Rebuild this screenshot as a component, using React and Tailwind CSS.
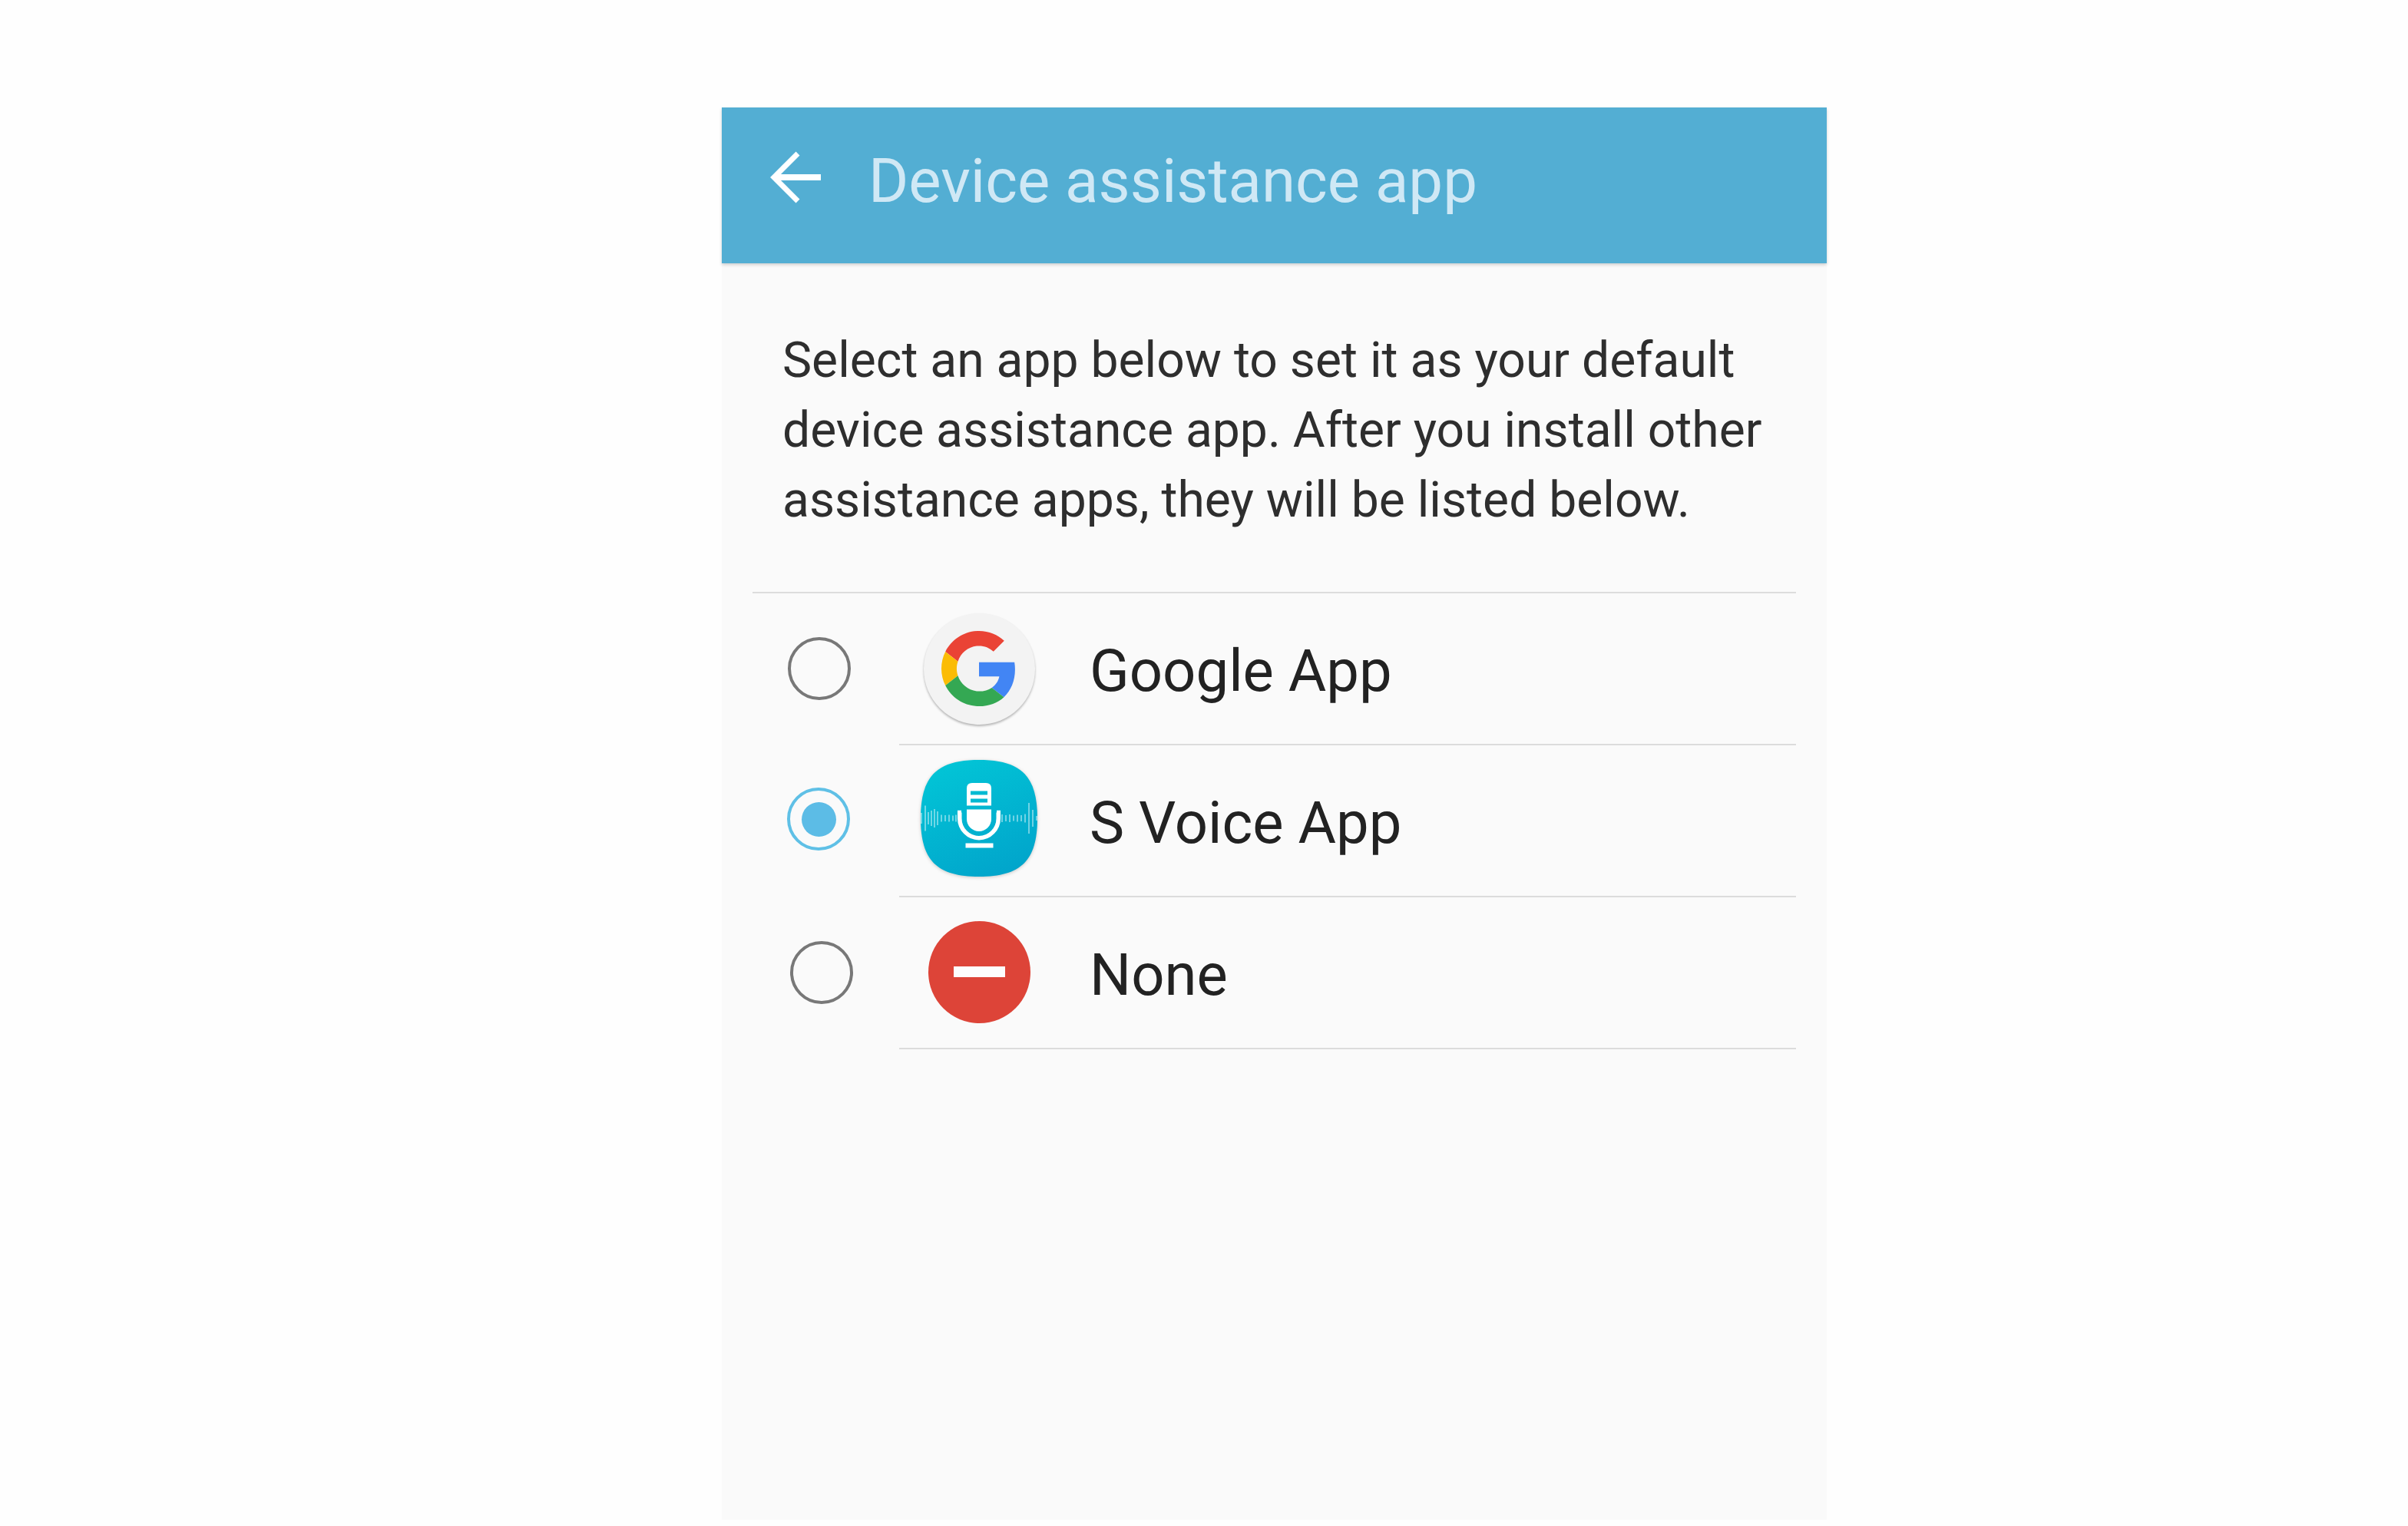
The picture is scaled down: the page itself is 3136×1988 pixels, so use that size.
const waveBars = [
  [-75, 14], [-70, 33], [-66, 16], [-62, 20], [-58, 24], [-54, 18], [-49, 9], [-44, 8], [-39, 9], [-34, 7], [-30, 9],
  [30, 10], [35, 8], [40, 10], [45, 7], [50, 9], [55, 8], [60, 11], [65, 40], [70, 22], [75, 6],
];

function BackArrow() {
  return (
    <svg width="72" height="80" viewBox="0 0 72 80" className="shrink-0" fill="none">
      <path d="M6 40H67" stroke="#ffffff" strokeWidth="8" />
      <path d="M37 9L6 40L37 71" stroke="#ffffff" strokeWidth="7" strokeLinejoin="miter" />
    </svg>
  );
}

function GoogleIcon() {
  return (
    <div className="w-[145px] h-[145px] rounded-full bg-[#f3f3f3] flex items-center justify-center shadow-[0_2px_3px_rgba(0,0,0,0.28)]">
      <svg width="98" height="98" viewBox="0 0 48 48">
        <path fill="#EA4335" d="M24 9.5c3.54 0 6.71 1.22 9.21 3.6l6.85-6.85C35.9 2.38 30.47 0 24 0 14.62 0 6.51 5.38 2.56 13.22l7.98 6.19C12.43 13.72 17.74 9.5 24 9.5z" />
        <path fill="#4285F4" d="M46.98 24.55c0-1.57-.15-3.09-.38-4.55H24v9.02h12.94c-.58 2.96-2.26 5.48-4.78 7.18l7.73 6c4.51-4.18 7.09-10.36 7.09-17.65z" />
        <path fill="#FBBC05" d="M10.53 28.59c-.48-1.45-.76-2.99-.76-4.59s.27-3.14.76-4.59l-7.98-6.19C.92 16.46 0 20.12 0 24c0 3.88.92 7.54 2.56 10.78l7.97-6.19z" />
        <path fill="#34A853" d="M24 48c6.48 0 11.93-2.13 15.89-5.81l-7.73-6c-2.15 1.45-4.92 2.3-8.16 2.3-6.26 0-11.57-4.22-13.47-9.91l-7.98 6.19C6.51 42.62 14.62 48 24 48z" />
      </svg>
    </div>
  );
}

function SVoiceIcon() {
  return (
    <svg width="160" height="160" viewBox="0 0 160 160" className="drop-shadow-[0_1px_2px_rgba(0,0,0,0.2)]">
      <defs>
        <linearGradient id="svoice" x1="0.3" y1="0" x2="0.75" y2="1">
          <stop offset="0" stopColor="#02c4d6" />
          <stop offset="1" stopColor="#01a4cb" />
        </linearGradient>
      </defs>
      <path d="M80 4C135 4 156 25 156 80C156 135 135 156 80 156C25 156 4 135 4 80C4 25 25 4 80 4Z" fill="url(#svoice)" />
      {waveBars.map(([dx, h]) => (
        <rect key={dx} x={80 + dx - 0.8} y={80 - h / 2} width="1.6" height={h} fill="#ffffff" opacity="0.55" />
      ))}
      <path fillRule="evenodd" fill="#ffffff" d="M64 41Q64 34 71 34H89Q96 34 96 41V63.5H64ZM69 44.5V49.5H91V44.5ZM69 54.5V59.5H91V54.5Z" />
      <path fill="#ffffff" d="M64 68.5H96V81A16 16 0 0 1 64 81Z" />
      <path d="M57 72.5H54.75V80A25.25 25.7 0 0 0 105.25 80V72.5H103" fill="none" stroke="#ffffff" strokeWidth="5.5" />
      <rect x="62.5" y="112.5" width="36" height="6" fill="#ffffff" />
    </svg>
  );
}

function NoneIcon() {
  return (
    <div className="w-[133px] h-[133px] rounded-full bg-[#dd4438] flex items-center justify-center">
      <div className="w-[67px] h-[14px] bg-[#fdfdfd]" />
    </div>
  );
}

function Radio({ checked }) {
  if (checked) {
    return (
      <div className="w-[82px] h-[82px] rounded-full border-[4px] border-[#5fc0e6] flex items-center justify-center">
        <div className="w-[45px] h-[45px] rounded-full bg-[#5cbce6]" />
      </div>
    );
  }
  return <div className="w-[82px] h-[82px] rounded-full border-[4px] border-[#787878]" />;
}

const rows = [
  { label: 'Google App', icon: <GoogleIcon />, radioClass: 'ml-[46px] mb-[2px]', iconClass: '' },
  { label: 'S Voice App', icon: <SVoiceIcon />, radioClass: 'ml-[45px] mb-[6px]', iconClass: 'mb-[6px]', checked: true },
  { label: 'None', icon: <NoneIcon />, radioClass: 'ml-[49px] mb-[2px]', iconClass: 'mb-[2px]' },
];

export default function App() {
  return (
    <div className="w-[3136px] h-[1988px] bg-[#fefefe] pt-[140px] pl-[940px] font-['Roboto',sans-serif] overflow-hidden">
      <div className="w-[1439px] h-[1840px] bg-[#fafafa]">
        <div className="h-[203px] bg-[#53aed3] flex items-start pl-[62px] pt-[51px] shadow-[0_2px_4px_rgba(0,0,0,0.18)] relative">
          <BackArrow />
          <h1 className="ml-[57px] -mt-[2px] text-[79.8px] leading-[94px] text-[#cfe8f5] font-normal">Device assistance app</h1>
        </div>
        <p className="pt-[81px] pl-[79px] text-[64.2px] leading-[91px] text-[#2e2e2e] whitespace-nowrap">
          Select an app below to set it as your default
          <br />
          device assistance app. After you install other
          <br />
          assistance apps, they will be listed below.
        </p>
        <div className="mx-[40px] mt-[74px] border-t-2 border-[#dcdcdc]">
          {rows.map((row) => (
            <div key={row.label} className="flex h-[198px]">
              <div className="w-[191px] shrink-0 flex items-center">
                <div className={row.radioClass}>
                  <Radio checked={row.checked} />
                </div>
              </div>
              <div className="flex-1 flex items-center border-b-2 border-[#dcdcdc]">
                <div className="w-[208px] shrink-0 flex items-center justify-center">
                  <div className={row.iconClass}>{row.icon}</div>
                </div>
                <span className="ml-[40px] pt-[5px] text-[76px] text-[#222222]">{row.label}</span>
              </div>
            </div>
          ))}
        </div>
      </div>
    </div>
  );
}
